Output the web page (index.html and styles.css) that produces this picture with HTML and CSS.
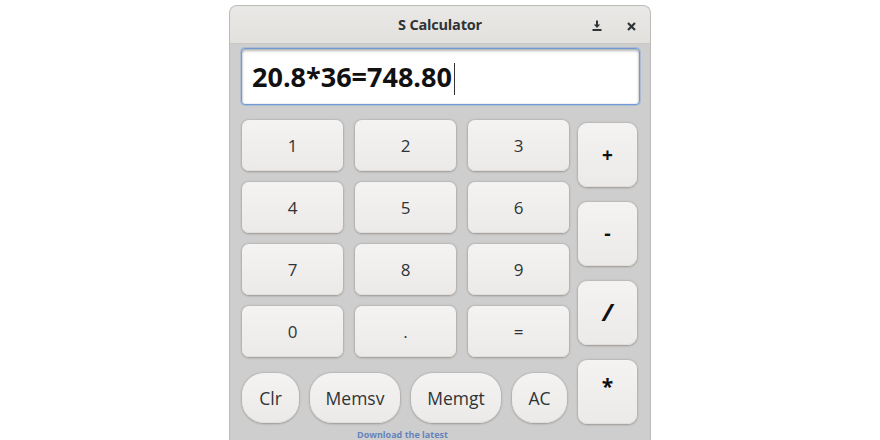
FILE: index.html
```html
<!DOCTYPE html>
<html>
<head>
<meta charset="utf-8">
<link rel="stylesheet" href="styles.css">
</head>
<body>
<div class="window">
  <div class="titlebar">
    <span class="title">S Calculator</span>
    <div class="tb-buttons">
      <svg class="tb-icon" width="10" height="11" viewBox="0 0 10 11"><path d="M5 0.5V6" stroke="#2e3436" stroke-width="2"/><path d="M1.8 4.6H8.2L5 8Z" fill="#2e3436"/><rect x="0.5" y="9" width="9" height="2" fill="#2e3436"/></svg>
      <svg class="tb-icon close" width="9" height="9" viewBox="0 0 9 9"><path d="M1 1L8 8M8 1L1 8" stroke="#2e3436" stroke-width="2.2"/></svg>
    </div>
  </div>
  <div class="content">
    <div class="entry"><span class="entry-text">20.8*36=748.80</span><span class="caret"></span></div>
    <div class="keys">
      <div class="left">
        <div class="grid">
          <button class="btn">1</button>
          <button class="btn">2</button>
          <button class="btn">3</button>
          <button class="btn">4</button>
          <button class="btn">5</button>
          <button class="btn">6</button>
          <button class="btn">7</button>
          <button class="btn">8</button>
          <button class="btn">9</button>
          <button class="btn">0</button>
          <button class="btn">.</button>
          <button class="btn">=</button>
        </div>
        <div class="bottom-row">
          <button class="btn pill w-clr">Clr</button>
          <button class="btn pill w-mem">Memsv</button>
          <button class="btn pill w-mem">Memgt</button>
          <button class="btn pill w-ac">AC</button>
        </div>
      </div>
      <div class="ops">
        <button class="btn op">+</button>
        <button class="btn op minus">-</button>
        <button class="btn op slash">/</button>
        <button class="btn op star">*</button>
      </div>
    </div>
    <div class="behind">Download the latest</div>
  </div>
</div>
</body>
</html>
```
FILE: styles.css
```css
* { box-sizing: border-box; }
html, body { margin: 0; padding: 0; background: #ffffff; }
body { font-family: "Open Sans", "DejaVu Sans", sans-serif; color: #2e3436; }

.window {
  margin: 5px 0 0 229px;
  width: 422px;
  height: 435px;
  border: 1px solid #bdbbb8;
  border-bottom: none;
  border-radius: 8px 8px 0 0;
  overflow: hidden;
  background: #cecece;
  display: flex;
  flex-direction: column;
}

.titlebar {
  height: 38px;
  flex: none;
  background: linear-gradient(#e9e8e6, #e3e1de);
  border-bottom: 1px solid #cac7c3;
  display: flex;
  align-items: center;
  justify-content: center;
  position: relative;
}
.title {
  font-weight: 700;
  font-size: 14.5px;
  color: #2e3436;
  letter-spacing: -0.2px;
  margin-top: -1px;
}
.tb-buttons {
  position: absolute;
  right: 14px;
  top: 14px;
  display: flex;
  align-items: center;
  gap: 25px;
}
.tb-icon { display: block; }
.tb-icon.close { margin-top: 1px; }

.content {
  flex: 1;
  padding: 4px 10px 0 11px;
  position: relative;
}

.entry {
  width: 399px;
  height: 57px;
  background: #ffffff;
  border: 1px solid #6f9ad6;
  border-radius: 4px;
  box-shadow: inset 0 2px 3px rgba(0,0,0,0.28), inset 0 0 2px rgba(0,0,0,0.18), 0 0 0 1px rgba(111,154,214,0.35);
  display: flex;
  align-items: center;
  padding-left: 10px;
}
.entry-text {
  font-weight: 700;
  font-size: 27px;
  color: #111111;
  letter-spacing: 0;
  line-height: 1;
}
.caret {
  width: 1.5px;
  height: 32px;
  background: #333333;
  margin-left: 2px;
  margin-top: 4px;
}

.keys {
  display: flex;
  margin-top: 15px;
}
.left {
  width: 327px;
  padding-left: 1px;
}
.grid {
  display: grid;
  grid-template-columns: repeat(3, 101px);
  grid-auto-rows: 51px;
  column-gap: 12px;
  row-gap: 11px;
}
.btn {
  font-family: "Open Sans", "DejaVu Sans", sans-serif;
  font-size: 17px;
  color: #2e3436;
  border: none;
  border-radius: 7px;
  background: linear-gradient(#f4f3f2, #eceae8);
  box-shadow: 0 0 2px 1px rgba(0,0,0,0.10), 0 1px 2px rgba(60,40,20,0.22), inset 0 -1px 0 #e0ddda;
  padding: 0;
  display: flex;
  align-items: center;
  justify-content: center;
}

.bottom-row {
  display: flex;
  gap: 11px;
  margin-top: 16px;
}
.pill {
  height: 50px;
  border-radius: 22px;
  font-size: 17.5px;
}
.w-clr { width: 57px; }
.w-mem { width: 90px; }
.w-ac { width: 55px; }

.ops {
  display: flex;
  flex-direction: column;
  gap: 15px;
  margin-left: 10px;
  padding-top: 3px;
}
.op {
  width: 59px;
  height: 64px;
  border-radius: 9px;
  font-weight: 700;
  font-size: 19px;
  color: #111111;
}
.minus { font-size: 20px; padding-bottom: 4px; }
.slash { font-size: 24px; font-style: italic; padding-bottom: 4px; }
.star { font-size: 21px; padding-bottom: 12px; }

.behind {
  position: absolute;
  left: 127px;
  bottom: 0;
  font-weight: 700;
  font-size: 9px;
  line-height: 10px;
  color: #3a63b5;
  opacity: 0.7;
}
```
